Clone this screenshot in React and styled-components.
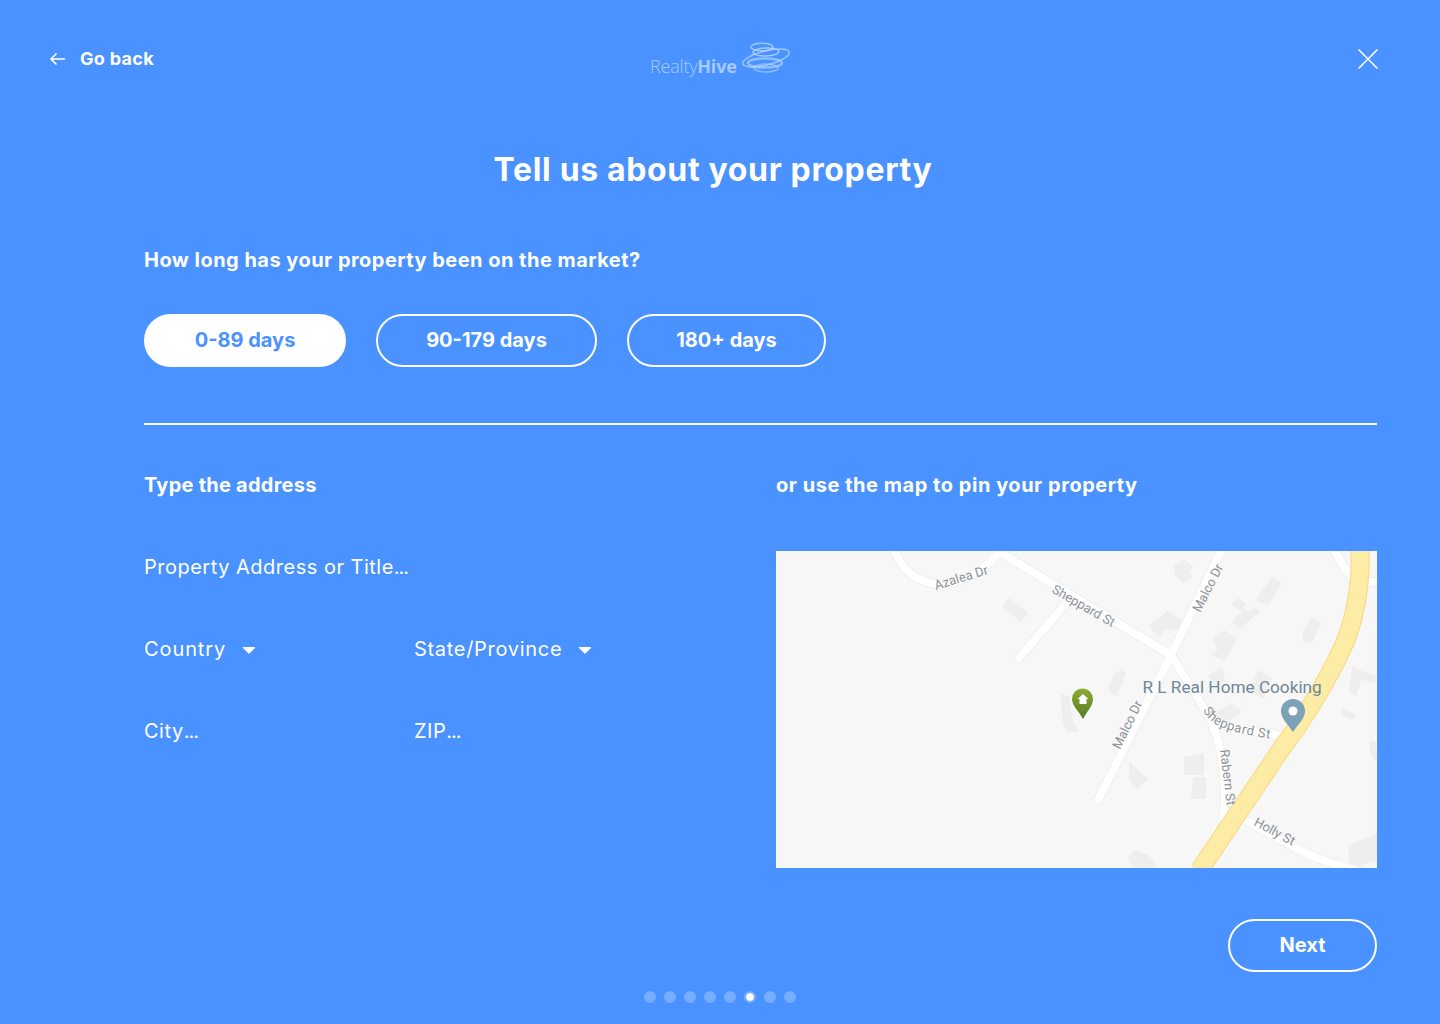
import React from "react";
import styled, { createGlobalStyle } from "styled-components";

const Global = createGlobalStyle`
  html, body { margin: 0; padding: 0; background: #4992ff; }
  * { box-sizing: border-box; }
  body { font-family: Inter, "Open Sans", "Liberation Sans", sans-serif; color: #fff; }
`;
const Page = styled.div`
  width: 1440px; height: 1024px; background: #4992ff; color: #fff; overflow: hidden;
  padding: 41px 62px 0 49px; display: flex; flex-direction: column;
`;
const Header = styled.header`
  height: 36px; display: grid; grid-template-columns: 1fr auto 1fr; align-items: center;
`;
const BackLink = styled.a`
  display: flex; align-items: center; gap: 15px; font-size: 18px; font-weight: 700; letter-spacing: .3px; padding-bottom: 2px;
  svg { margin-top: 2px; }
`;
const Logo = styled.div`
  display: flex; align-items: flex-end; width: 141px; height: 36px; margin-left: 14px; position: relative; top: -1px;
`;
const LogoText = styled.span`
  font-family: "Open Sans", sans-serif; font-size: 18px; font-weight: 300; color: #a5cbff; line-height: 20px; letter-spacing: -.2px; margin-right: 4px;
  b { font-weight: 700; }
`;
const Close = styled.div`
  justify-self: end; height: 20px; display: flex;
`;
const Title = styled.h1`
  margin: 73px 1px 0 0; font-size: 32px; line-height: 40px; font-weight: 700; text-align: center; letter-spacing: .65px;
`;
const Body = styled.main`
  padding: 0 1px 0 95px; display: flex; flex-direction: column;
`;
const Label = styled.h2`
  margin: 0; font-size: 20px; line-height: 26px; font-weight: 700; letter-spacing: ${p => p.$ls || ".47px"};
`;
const Question = styled(Label)`
  margin-top: 57px;
`;
const Choices = styled.div`
  display: flex; gap: 30px; margin-top: 41px;
`;
const Pill = styled.button`
  height: 53px; width: ${p => p.$w}px; border-radius: 27px; border: 2px solid #fff;
  background: ${p => (p.$active ? "#fff" : "transparent")};
  color: ${p => (p.$active ? "#4992ff" : "#fff")};
  font: 700 20px/1 Inter, sans-serif; padding: 0 0 2px;
`;
const Divider = styled.hr`
  margin: 56px 0 0; height: 2px; border: 0; background: #fff;
`;
const Columns = styled.section`
  display: grid; grid-template-columns: 632px 601px; margin-top: 47px;
`;
const Fields = styled.div`
  display: grid; grid-template-columns: 270px 270px; grid-auto-rows: 82px; margin-top: 53px;
`;
const Field = styled.div`
  grid-column: ${p => (p.$wide ? "1 / -1" : "auto")};
  display: flex; align-items: center; height: 32px; font-size: 20px; font-weight: 400; gap: 16px; letter-spacing: ${p => p.$ls || ".5px"};
`;
const Dim = styled.span`
  letter-spacing: -1px;
`;
const Caret = styled.span`
  width: 0; height: 0; border-left: 7px solid transparent; border-right: 7px solid transparent; border-top: 7px solid #fff; margin-top: 2px; border-radius: 2px;
`;
const MapFrame = styled.div`
  margin-top: 53px; height: 317px; background: #f7f7f7; overflow: hidden;
  svg { display: block; }
`;
const Footer = styled.div`
  display: flex; justify-content: flex-end; margin-top: 51px;
`;
const NextButton = styled(Pill)``;
const Dots = styled.div`
  display: flex; gap: 8px; justify-content: center; margin: 19px 0 0; width: 1342px;
`;
const Dot = styled.span`
  width: 12px; height: 12px; border-radius: 50%;
  background: ${p => (p.$on ? "#fff" : "rgba(255,255,255,.25)")};
  ${p => p.$on && "border: 2px solid #79aeff; background-clip: padding-box;"}
`;

const buildings = [
  "M226 55 L233 47 L252 62 L245 70 L239 66 Z",
  "M398 15 L408 8 L417 16 L413 21 L416 26 L407 33 L399 24 Z",
  "M378 70 L392 60 L407 70 L402 79 L388 78 L384 86 L373 76 Z",
  "M482 46 L496 25 L506 32 L493 54 L480 50 Z",
  "M455 53 L462 47 L470 53 L465 60 Z",
  "M458 68 L468 57 L472 60 L480 56 L484 61 L470 72 L465 78 L456 72 Z",
  "M436 87 L448 79 L461 87 L449 110 L435 104 L442 98 Z",
  "M527 80 L536 66 L546 72 L535 93 L526 90 Z",
  "M432 125 L445 116 L447 118 L449 130 L440 135 Z",
  "M473 140 L482 119 L496 128 L488 148 Z",
  "M337 125 L346 117 L350 122 L341 145 L332 140 Z",
  "M576 116 L586 120 L601 125 L599 133 L585 128 L581 145 L573 140 Z",
  "M566 157 L580 163 L578 169 L565 165 Z",
  "M600 190 L601 210 L595 205 L593 190 Z",
  "M353 210 L372 228 L362 238 L354 231 L353 226 Z",
  "M408 206 L428 202 L428 224 L408 224 Z",
  "M417 226 L430 226 L430 248 L414 248 L416 240 Z",
  "M358 299 L372 304 L378 310 L380 317 L356 317 L352 307 Z",
  "M572 295 L601 282 L601 310 L574 317 Z",
  "M284 143 L293 145 L297 170 L303 180 L292 182 L287 172 Z",
  "M430 168 L455 152 L466 160 L454 170 L442 167 Z",
];

const roads = [
  "M117 -4 C126 20 140 30 160 33 C185 33 205 22 223 2",
  "M222 0 L395 104 L428 157 C433 170 440 172 455 176 L510 186",
  "M291 51 L243 107",
  "M447 -4 L395 104 L322 249",
  "M430 160 C446 190 452 230 447 275",
  "M467 268 L520 297 C535 306 555 312 585 321",
  "M556 -4 C566 12 570 24 585 31 L605 31",
];
const highway = "M584 -3 L584 20 C582 50 575 80 565 100 C552 128 530 165 508 194 L423 320";

const MapArt = () => (
  <svg width="601" height="317" viewBox="0 0 601 317" fill="none">
    <defs>
      <linearGradient id="pinGreen" x1="0" y1="0" x2="0" y2="1">
        <stop offset="0" stopColor="#8cad2f" />
        <stop offset="1" stopColor="#55792a" />
      </linearGradient>
      <path id="shepCurve" d="M427 159 C435 175 447 180 502 189" />
    </defs>
    {buildings.map((d, i) => <path key={i} d={d} fill="#eeeeee" />)}
    <g stroke="#ececec" strokeWidth="9.500" strokeLinecap="round" strokeLinejoin="round">
      {roads.map((d, i) => <path key={i} d={d} />)}
    </g>
    <g stroke="#fff" strokeWidth="8" strokeLinecap="round" strokeLinejoin="round">
      {roads.map((d, i) => <path key={i} d={d} />)}
    </g>
    <path d={highway} stroke="#f9d77e" strokeWidth="19" />
    <path d={highway} stroke="#fdeca6" strokeWidth="17" />
    <g fontFamily="Roboto, sans-serif" fontSize="13" fill="#8e9299">
      <text transform="translate(160 39) rotate(-17)">Azalea Dr</text>
      <text transform="translate(275 41) rotate(30)">Sheppard St</text>
      <text transform="translate(424 62) rotate(-63)">Malco Dr</text>
      <text transform="translate(344 199) rotate(-64)">Malco Dr</text>
      <text letterSpacing=".5"><textPath href="#shepCurve">Sheppard St</textPath></text>
      <text transform="translate(444 199) rotate(83)">Rabern St</text>
      <text transform="translate(477 274) rotate(28)">Holly St</text>
    </g>
    <text x="366.500" y="142" fontFamily="Roboto, sans-serif" fontSize="17.200" fill="#6f8796">R L Real Home Cooking</text>
    <path d="M517 181 C512 173 505 168 505 160 A12 12 0 0 1 529 160 C529 168 522 173 517 181 Z" fill="#7ba2b6" />
    <circle cx="517" cy="160" r="4.500" fill="#fff" />
    <path d="M307 168 C303 160 296 155 296 148 A10.500 10.500 0 0 1 317 148 C317 155 311 160 307 168 Z" fill="url(#pinGreen)" />
    <path d="M307 143 L312.500 148 L310.500 148 L310.500 153 L303.500 153 L303.500 148 L301.500 148 Z" fill="#fff" />
  </svg>
);

const LogoMark = () => (
  <svg width="50" height="34" viewBox="0 0 50 34" fill="none" stroke="#b5d5ff" strokeWidth="1.500">
    <ellipse cx="21" cy="5" rx="11" ry="3.800" opacity=".75" />
    <ellipse cx="25" cy="10" rx="13" ry="4" transform="rotate(-2 25 10)" opacity=".8" />
    <ellipse cx="25" cy="16" rx="24" ry="7" transform="rotate(-14 25 16)" opacity=".75" />
    <ellipse cx="24" cy="21" rx="17" ry="4.500" strokeWidth="2.600" opacity=".65" />
    <ellipse cx="25" cy="26" rx="12" ry="4" opacity=".6" />
  </svg>
);

const dots = [0, 1, 2, 3, 4, 5, 6, 7];

export default function App() {
  return (
    <Page>
      <Global />
      <Header>
        <BackLink>
          <svg width="16" height="14" viewBox="0 0 16 14" fill="none" stroke="#fff" strokeWidth="1.600">
            <path d="M16 7 H2 M7.500 1.500 L2 7 L7.500 12.500" />
          </svg>
          Go back
        </BackLink>
        <Logo>
          <LogoText>Realty<b>Hive</b></LogoText>
          <LogoMark />
        </Logo>
        <Close>
          <svg width="20" height="20" viewBox="0 0 20 20" stroke="#fff" strokeWidth="1.500">
            <path d="M0.500 0.500 L19.500 19.500 M19.500 0.500 L0.500 19.500" />
          </svg>
        </Close>
      </Header>
      <Title>Tell us about your property</Title>
      <Body>
        <Question>How long has your property been on the market?</Question>
        <Choices>
          <Pill $active $w={202}>0-89 days</Pill>
          <Pill $w={221}>90-179 days</Pill>
          <Pill $w={199}>180+ days</Pill>
        </Choices>
        <Divider />
        <Columns>
          <div>
            <Label $ls=".25px">Type the address</Label>
            <Fields>
              <Field $wide><span>Property Address or Title<Dim>...</Dim></span></Field>
              <Field $ls=".9px">Country <Caret /></Field>
              <Field $ls=".7px">State/Province <Caret /></Field>
              <Field><span>City<Dim>...</Dim></span></Field>
              <Field><span>ZIP<Dim>...</Dim></span></Field>
            </Fields>
          </div>
          <div>
            <Label $ls=".53px">or use the map to pin your property</Label>
            <MapFrame><MapArt /></MapFrame>
          </div>
        </Columns>
        <Footer><NextButton $w={149}>Next</NextButton></Footer>
      </Body>
      <Dots>{dots.map(i => <Dot key={i} $on={i === 5} />)}</Dots>
    </Page>
  );
}
